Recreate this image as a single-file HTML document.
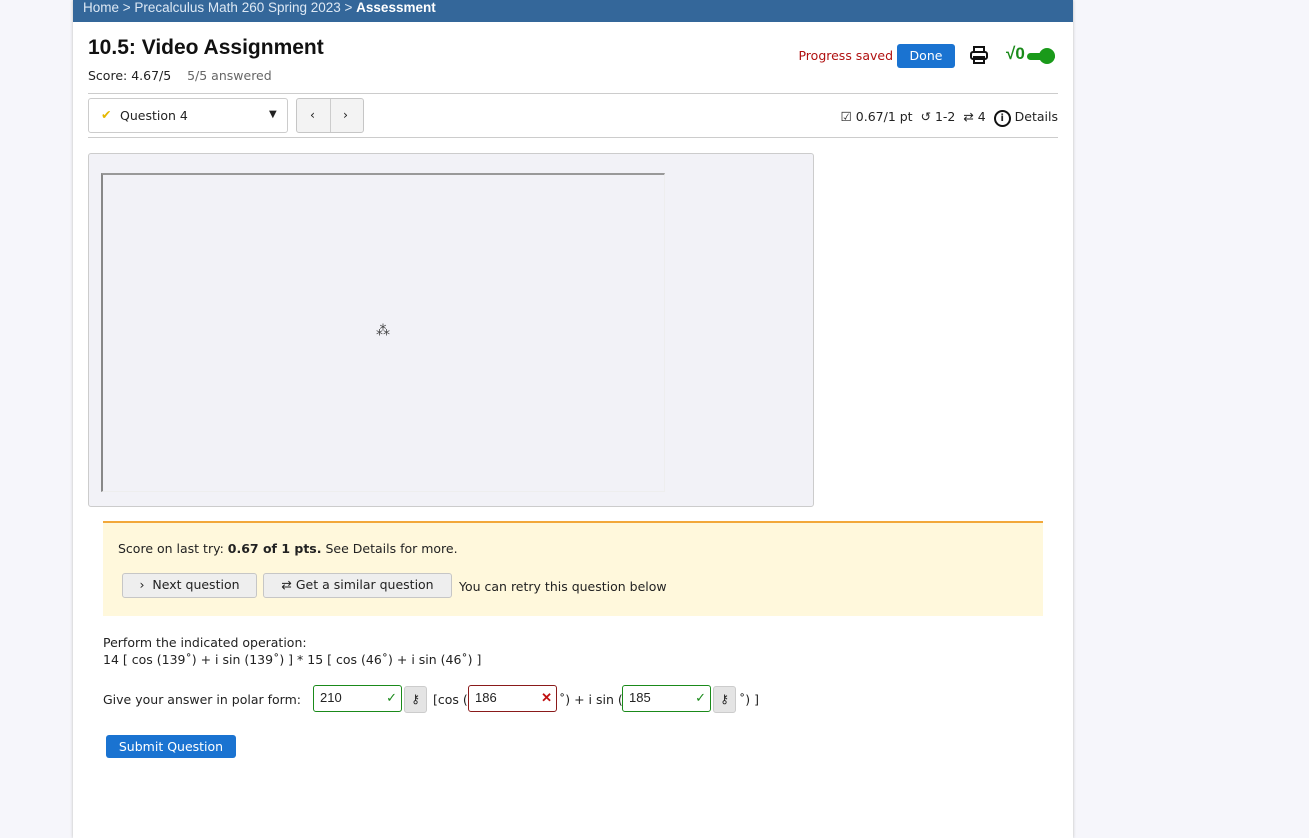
<!DOCTYPE html>
<html><head><style>
body{margin:0;width:1309px;height:838px;background:#f6f6fb;font-family:"DejaVu Sans","Liberation Sans",sans-serif;font-size:12.5px;color:#222;position:relative;overflow:hidden}
.page{position:absolute;left:73px;top:0;width:1000px;height:838px;background:#fff;box-shadow:0 0 3px #bbb}
.crumb{height:22px;background:#34679a;color:#dde8f4;font-family:"Liberation Sans",sans-serif;font-size:13.5px;line-height:15px;padding-left:10px}
.crumb b{color:#fff}
.a{position:absolute;white-space:nowrap}
.btn{border:1px solid #c6c6c6;background:#eee;border-radius:3px;position:absolute;line-height:22px}
.box{position:absolute;height:27px;border:1px solid #1a8a1a;border-radius:3px;box-sizing:border-box;padding:4px 6px;font-family:"Liberation Sans",sans-serif;font-size:13px}
.key{position:absolute;width:23px;height:27px;background:#e4e4e4;border:1px solid #ccc;border-radius:3px;box-sizing:border-box;text-align:center;font-size:12px;line-height:24px}
</style></head><body>
<div class="page">
<div class="crumb">Home &gt; Precalculus Math 260 Spring 2023 &gt; <b>Assessment</b></div>
<div class="a" style="left:15px;top:36px;font-size:21px;font-weight:bold;color:#111;font-family:'Liberation Sans',sans-serif">10.5: Video Assignment</div>
<div class="a" style="left:15px;top:68px">Score: 4.67/5 &nbsp;&nbsp; <span style="color:#666">5/5 answered</span></div>
<div class="a" style="right:180px;top:48px;color:#b01010">Progress saved</div>
<div class="a" style="left:824px;top:44px;width:58px;height:24px;background:#1a73d1;color:#fff;border-radius:3px;text-align:center;line-height:24px">Done</div>
<svg class="a" style="left:896px;top:45px" width="20" height="20" viewBox="0 0 20 20" fill="none" stroke="#111" stroke-width="2"><rect x="5" y="2" width="10" height="5"/><rect x="2" y="7" width="16" height="7" rx="2"/><rect x="5" y="12" width="10" height="6"/></svg>
<div class="a" style="left:933px;top:44px;color:#1a8a1a;font-size:17px;font-weight:bold;font-family:'Liberation Sans',sans-serif">√0</div>
<div class="a" style="left:954px;top:53px;width:28px;height:7px;background:#1a9a1a;border-radius:4px"></div>
<div class="a" style="left:966px;top:48px;width:16px;height:16px;background:#1a9a1a;border-radius:50%"></div>
<div class="a" style="left:15px;top:93px;width:970px;border-top:1px solid #ccc"></div>
<div class="a" style="left:15px;top:98px;width:198px;height:33px;border:1px solid #ccc;border-radius:3px"><span style="position:absolute;left:12px;top:8px;color:#e5b800">✔</span><span style="position:absolute;left:31px;top:9px">Question 4</span><span style="position:absolute;left:180px;top:10px;font-size:10px">▼</span></div>
<div class="btn" style="left:223px;top:98px;width:66px;height:33px;background:#f3f3f3"><span style="position:absolute;left:13px;top:5px">‹</span><div style="position:absolute;left:33px;top:0;height:33px;border-left:1px solid #ccc"></div><span style="position:absolute;left:46px;top:5px">›</span></div>
<div class="a" style="right:15px;top:109px">☑ 0.67/1 pt &nbsp;↺ 1-2 &nbsp;⇄ 4 &nbsp;<span style="display:inline-block;width:17px;height:17px;border:2px solid #111;border-radius:50%;box-sizing:border-box;text-align:center;font-size:10px;line-height:13px;font-weight:bold">i</span> Details</div>
<div class="a" style="left:15px;top:137px;width:970px;border-top:1px solid #ccc"></div>
<div class="a" style="left:15px;top:153px;width:724px;height:352px;background:#f2f2f7;border:1px solid #ccc;border-radius:3px"></div>
<div class="a" style="left:28px;top:173px;width:561px;height:316px;border-top:2px solid #999;border-left:2px solid #888;border-right:1px solid #eee;border-bottom:1px solid #eee"></div>
<div class="a" style="left:303px;top:323px;font-size:14px;color:#444">⁂</div>
<div class="a" style="left:30px;top:521px;width:940px;height:93px;background:#fff8dc;border-top:2px solid #f2a83a"></div>
<div class="a" style="left:45px;top:541px">Score on last try: <b>0.67 of 1 pts.</b> See Details for more.</div>
<div class="btn" style="left:49px;top:573px;width:133px;height:23px;text-align:center">› &nbsp;Next question</div>
<div class="btn" style="left:190px;top:573px;width:187px;height:23px;text-align:center">⇄ Get a similar question</div>
<div class="a" style="left:386px;top:579px">You can retry this question below</div>
<div class="a" style="left:30px;top:634px;line-height:17px">Perform the indicated operation:<br>14 [ cos (139˚) + i sin (139˚) ] * 15 [ cos (46˚) + i sin (46˚) ]</div>
<div class="a" style="left:30px;top:692px">Give your answer in polar form:</div>
<div class="box" style="left:240px;top:685px;width:89px">210<span style="position:absolute;right:4px;color:#1a8a1a">✓</span></div>
<div class="key" style="left:331px;top:686px">⚷</div>
<div class="a" style="left:360px;top:692px">[cos (</div>
<div class="box" style="left:395px;top:685px;width:89px;border-color:#8a1a1a">186<span style="position:absolute;right:4px;color:#c01010;font-weight:bold">✕</span></div>
<div class="a" style="left:486px;top:692px">˚) + i sin (</div>
<div class="box" style="left:549px;top:685px;width:89px">185<span style="position:absolute;right:4px;color:#1a8a1a">✓</span></div>
<div class="key" style="left:640px;top:686px">⚷</div>
<div class="a" style="left:666px;top:692px">˚) ]</div>
<div class="a" style="left:33px;top:735px;width:130px;height:23px;background:#1a73d1;color:#fff;border-radius:3px;text-align:center;line-height:23px">Submit Question</div>
</div>
</body></html>
